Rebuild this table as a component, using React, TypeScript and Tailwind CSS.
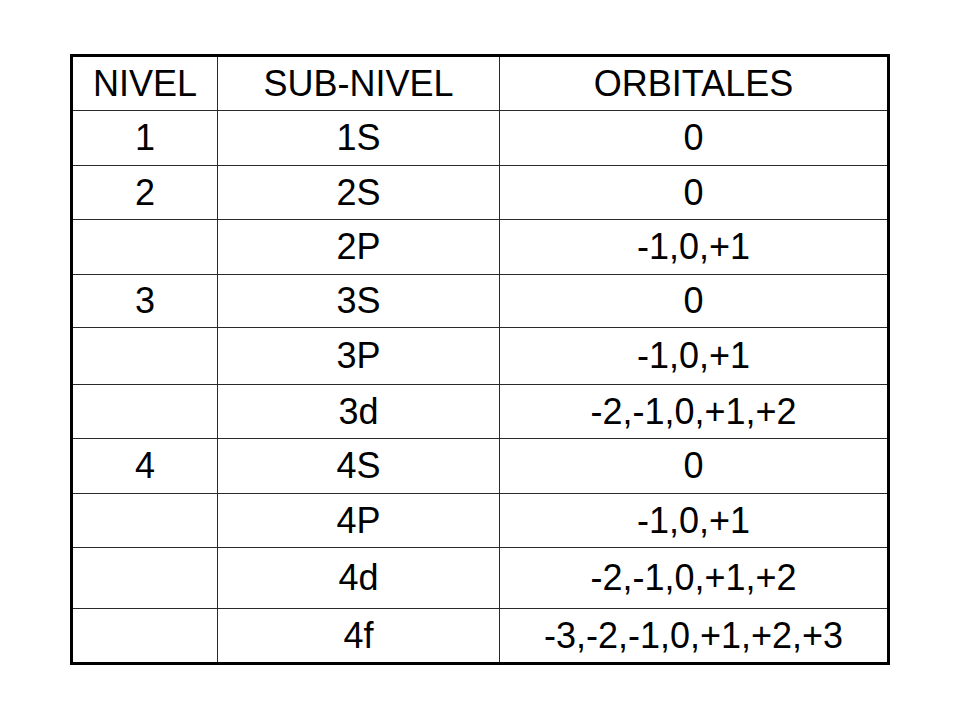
import React from "react";

const rows: { h: string; a: string; b: string; c: string }[] = [
  { h: "h-[54px]", a: "NIVEL", b: "SUB-NIVEL", c: "ORBITALES" },
  { h: "h-[55px]", a: "1", b: "1S", c: "0" },
  { h: "h-[54px]", a: "2", b: "2S", c: "0" },
  { h: "h-[55px]", a: "", b: "2P", c: "-1,0,+1" },
  { h: "h-[53px]", a: "3", b: "3S", c: "0" },
  { h: "h-[57px]", a: "", b: "3P", c: "-1,0,+1" },
  { h: "h-[54px]", a: "", b: "3d", c: "-2,-1,0,+1,+2" },
  { h: "h-[55px]", a: "4", b: "4S", c: "0" },
  { h: "h-[54px]", a: "", b: "4P", c: "-1,0,+1" },
  { h: "h-[61px]", a: "", b: "4d", c: "-2,-1,0,+1,+2" },
  { h: "h-[53px]", a: "", b: "4f", c: "-3,-2,-1,0,+1,+2,+3" },
];

export default function App() {
  return (
    <div
      className="w-[960px] h-[720px] bg-white pt-[54px] pl-[70px]"
      style={{ fontFamily: '"Liberation Sans", Arial, sans-serif' }}
    >
      <div className="w-[820px] border-[3px] border-black flex flex-col text-[36px] leading-none text-black">
        {rows.map((r, i) => (
          <div
            key={i}
            className={`flex ${r.h} ${i < rows.length - 1 ? "border-b border-[#2a2a2a]" : ""}`}
          >
            <div className="w-[145px] border-r border-[#2a2a2a] flex items-center justify-center">
              {r.a}
            </div>
            <div className="w-[282px] border-r border-[#2a2a2a] flex items-center justify-center">
              {r.b}
            </div>
            <div className="flex-1 flex items-center justify-center">{r.c}</div>
          </div>
        ))}
      </div>
    </div>
  );
}
